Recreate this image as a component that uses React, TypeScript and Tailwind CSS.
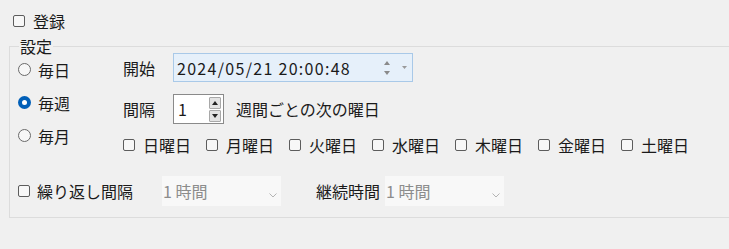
import React from 'react';

const font = "font-['Noto_Sans_CJK_JP','Noto_Sans_CJK_SC',sans-serif]";

function CheckBox() {
  return <span className="inline-block w-[12px] h-[12px] shrink-0 rounded-[2px] border border-[#5c5c5c] bg-[#f7f7f7]" />;
}

function Radio({ checked }: { checked?: boolean }) {
  if (checked) {
    return (
      <span className="flex items-center justify-center w-[13px] h-[13px] shrink-0 rounded-full bg-[#005fb8]">
        <span className="w-[5px] h-[5px] rounded-full bg-white" />
      </span>
    );
  }
  return <span className="inline-block w-[13px] h-[13px] shrink-0 rounded-full border border-[#6a6a6a] bg-[#f7f7f7]" />;
}

function Chevron() {
  return (
    <svg width="8" height="5" viewBox="0 0 8 5" className="mt-[9px]">
      <path d="M0.5 0.5 L4 4 L7.5 0.5" fill="none" stroke="#b4b4b4" strokeWidth="1" />
    </svg>
  );
}

function Combo() {
  return (
    <div className="flex items-center justify-between w-[119px] h-[30px] bg-[#f8f8f8] pl-[1px] pr-[4px] text-[#8c8c8c]">
      <span>1 時間</span>
      <Chevron />
    </div>
  );
}

const days = ['日曜日', '月曜日', '火曜日', '水曜日', '木曜日', '金曜日', '土曜日'];

export default function App() {
  return (
    <div className={`w-[729px] h-[249px] overflow-hidden bg-[#f0f0f0] text-[16px] leading-none text-[#1a1a1a] ${font}`}>
      {/* 登録 */}
      <div className="flex items-center gap-[8px] h-[22px] mt-[10px] pl-[13px]">
        <CheckBox />
        <span>登録</span>
      </div>

      <fieldset className="ml-[9px] mt-[7px] w-[740px] border border-[#dcdcdc] pb-[11px]">
        <legend className="ml-[9px] px-[1px] leading-[14px]">設定</legend>

        <div className="flex">
          {/* 頻度 */}
          <div className="w-[113px] pl-[8px] flex flex-col">
            {[
              { label: '毎日', checked: false },
              { label: '毎週', checked: true },
              { label: '毎月', checked: false },
            ].map(r => (
              <div key={r.label} className="flex items-center gap-[7px] h-[33px]">
                <Radio checked={r.checked} />
                <span>{r.label}</span>
              </div>
            ))}
          </div>

          <div className="flex flex-col">
            {/* 開始 */}
            <div className="flex items-center h-[29px]">
              <span className="w-[50px]">開始</span>
              <div className="flex items-center w-[240px] h-[29px] border border-[#a9c9e8] bg-[#e6f0fa] pl-[3px] pr-[5px]">
                <span className="flex-1 tracking-[1.3px]">2024/05/21 20:00:48</span>
                <div className="flex flex-col gap-[6px] mr-[12px]">
                  <svg width="6" height="4" viewBox="0 0 6 4"><path d="M3 0 L6 4 L0 4 Z" fill="#8a8a8a" /></svg>
                  <svg width="6" height="4" viewBox="0 0 6 4"><path d="M0 0 L6 0 L3 4 Z" fill="#8a8a8a" /></svg>
                </div>
                <svg width="5" height="3" viewBox="0 0 5 3"><path d="M0 0 L5 0 L2.5 3 Z" fill="#9a9a9a" /></svg>
              </div>
            </div>

            {/* 間隔 */}
            <div className="flex items-center h-[30px] mt-[12px]">
              <span className="w-[50px]">間隔</span>
              <div className="flex items-center w-[51px] h-[30px] border border-[#8a8a8a] bg-white pl-[4px] pr-[2px]">
                <span className="flex-1">1</span>
                <div className="flex flex-col gap-[1px]">
                  <div className="flex items-center justify-center w-[12px] h-[12px] border border-[#a8a8a8] bg-[#e3e3e3] rounded-[1px]">
                    <svg width="6" height="4" viewBox="0 0 6 4"><path d="M3 0 L6 4 L0 4 Z" fill="#222" /></svg>
                  </div>
                  <div className="flex items-center justify-center w-[12px] h-[12px] border border-[#a8a8a8] bg-[#e3e3e3] rounded-[1px]">
                    <svg width="6" height="4" viewBox="0 0 6 4"><path d="M0 0 L6 0 L3 4 Z" fill="#222" /></svg>
                  </div>
                </div>
              </div>
              <span className="ml-[12px]">週間ごとの次の曜日</span>
            </div>

            {/* 曜日 */}
            <div className="flex items-center h-[22px] mt-[10px] gap-[15px]">
              {days.map(d => (
                <div key={d} className="flex items-center gap-[8px]">
                  <CheckBox />
                  <span>{d}</span>
                </div>
              ))}
            </div>
          </div>
        </div>

        {/* 繰り返し */}
        <div className="flex items-center h-[30px] mt-[20px] pl-[8px]">
          <div className="flex items-center gap-[7px] w-[144px]">
            <CheckBox />
            <span>繰り返し間隔</span>
          </div>
          <Combo />
          <span className="ml-[35px] w-[69px]">継続時間</span>
          <Combo />
        </div>
      </fieldset>
    </div>
  );
}
